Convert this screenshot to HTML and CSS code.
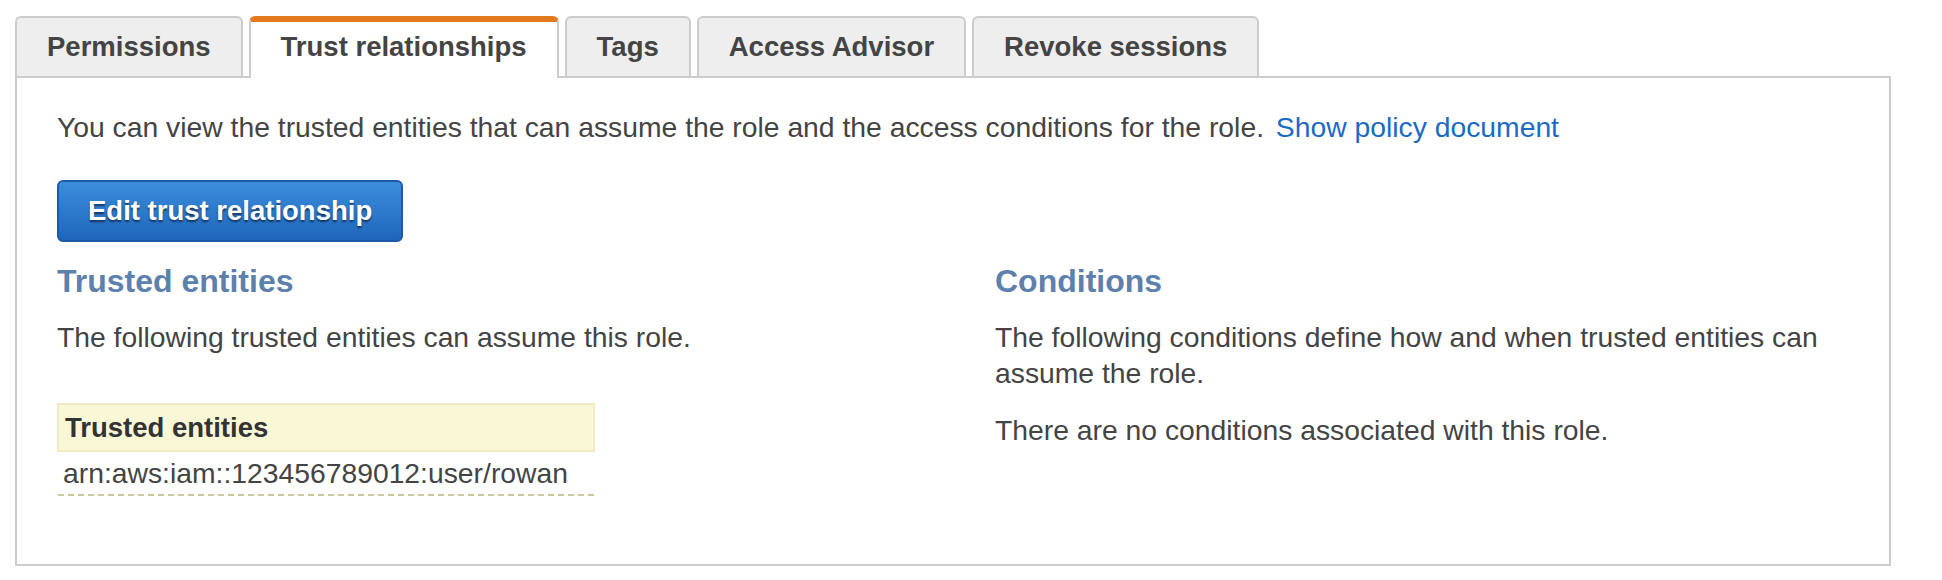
FILE: index.html
```html
<!DOCTYPE html>
<html>
<head>
<meta charset="utf-8">
<link rel="stylesheet" href="styles.css">
</head>
<body>
<div class="page">
  <ul class="tabs">
    <li class="tab">Permissions</li>
    <li class="tab active">Trust relationships</li>
    <li class="tab">Tags</li>
    <li class="tab">Access Advisor</li>
    <li class="tab">Revoke sessions</li>
  </ul>
  <div class="panel">
    <p class="intro">You can view the trusted entities that can assume the role and the access conditions for the role. <a class="link" href="#">Show policy document</a></p>
    <button class="btn-primary">Edit trust relationship</button>
    <div class="cols">
      <div class="col">
        <h3 class="heading">Trusted entities</h3>
        <p class="desc desc-left">The following trusted entities can assume this role.</p>
        <table class="entities">
          <thead>
            <tr><th>Trusted entities</th></tr>
          </thead>
          <tbody>
            <tr><td>arn:aws:iam::123456789012:user/rowan</td></tr>
          </tbody>
        </table>
      </div>
      <div class="col">
        <h3 class="heading">Conditions</h3>
        <p class="desc">The following conditions define how and when trusted entities can assume the role.</p>
        <p class="desc">There are no conditions associated with this role.</p>
      </div>
    </div>
  </div>
</div>
</body>
</html>
```

FILE: styles.css
```css
* { box-sizing: border-box; }
html, body {
  margin: 0;
  padding: 0;
  background: #fff;
}
body {
  font-family: "Liberation Sans", Arial, Helvetica, sans-serif;
  font-size: 28.3px;
  line-height: 36.4px;
  color: #444;
}
.page {
  padding: 16px 51px 0 15px;
}
.tabs {
  list-style: none;
  margin: 0;
  padding: 0;
  display: flex;
  gap: 6px;
  align-items: flex-start;
  position: relative;
  z-index: 1;
}
.tab {
  height: 60px;
  padding: 0 30px;
  display: flex;
  align-items: center;
  background: #eeeeee;
  border: 2px solid #cccccc;
  border-bottom: none;
  border-radius: 6px 6px 0 0;
  font-weight: bold;
  font-size: 27.5px;
  color: #444;
  white-space: nowrap;
}
.tab.active {
  background: #fff;
  border-top: 6px solid #e47a20;
  height: 62px;
  margin-bottom: -2px;
  padding-bottom: 6px;
}
.panel {
  border: 2px solid #cccccc;
  padding: 31px 40px 68px 40px;
}
.intro {
  margin: 0 0 35px 0;
}
.link {
  color: #1b6ac6;
  text-decoration: none;
  margin-left: 4px;
}
.btn-primary {
  display: block;
  font-family: inherit;
  font-size: 27.5px;
  font-weight: bold;
  line-height: 36px;
  color: #fff;
  padding: 11px 29px;
  border: 2px solid #1c5ca6;
  border-radius: 6px;
  background: linear-gradient(#3c8ddc, #1f66bb);
  text-shadow: 0 2px 2px rgba(0, 0, 0, 0.55);
  margin: 0 0 20px 0;
}
.cols {
  display: grid;
  grid-template-columns: 888px 1fr;
  column-gap: 50px;
}
.heading {
  margin: 0 0 18px 0;
  font-size: 32px;
  line-height: 38.4px;
  font-weight: bold;
  color: #5d80ac;
}
.desc {
  margin: 0 0 20px 0;
}
.desc-left {
  margin-bottom: 48px;
}
.entities {
  width: 538px;
  border-collapse: collapse;
}
.entities th {
  text-align: left;
  background: #faf7d7;
  border: 2px solid #efecc4;
  height: 47px;
  padding: 0 6px;
  font-size: 27.5px;
  font-weight: bold;
  color: #333;
}
.entities td {
  padding: 3px 5px 2px 5px;
  border-bottom: 2px dashed #c9c99c;
  color: #444;
}
```
